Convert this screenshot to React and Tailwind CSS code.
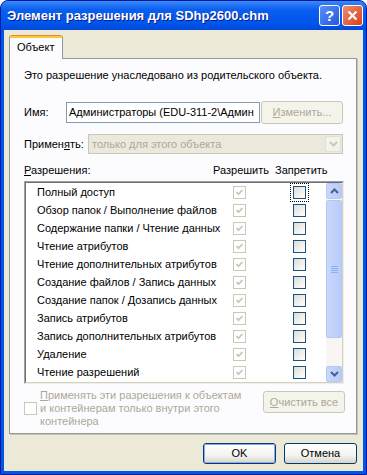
import React from "react";

const perms = [
  "Полный доступ",
  "Обзор папок / Выполнение файлов",
  "Содержание папки / Чтение данных",
  "Чтение атрибутов",
  "Чтение дополнительных атрибутов",
  "Создание файлов / Запись данных",
  "Создание папок / Дозапись данных",
  "Запись атрибутов",
  "Запись дополнительных атрибутов",
  "Удаление",
  "Чтение разрешений",
];

function Check({ color }) {
  return (
    <svg width="9" height="9" viewBox="0 0 9 9">
      <polyline points="1.5,4 3.5,6.2 7.5,2" fill="none" stroke={color} strokeWidth="1.8" />
    </svg>
  );
}

function AllowBox() {
  // disabled + checked
  return (
    <div className="flex h-[13px] w-[13px] items-center justify-center border border-[#cac8bb] bg-white">
      <Check color="#cac8bb" />
    </div>
  );
}

function DenyBox({ focused }) {
  return (
    <div
      className={`h-[13px] w-[13px] border border-[#1c5180] bg-[linear-gradient(135deg,#dcdcd7,#ffffff)] ${
        focused ? "outline-1 outline-dotted outline-black outline-offset-[2px]" : ""
      }`}
    />
  );
}

function Chevron({ up, color }) {
  return (
    <svg width="9" height="6" viewBox="0 0 9 6">
      <polyline
        points={up ? "1,5 4.5,1.5 8,5" : "1,1 4.5,4.5 8,1"}
        fill="none"
        stroke={color}
        strokeWidth="2"
      />
    </svg>
  );
}

function ScrollBtn({ up }) {
  return (
    <div className="flex h-[16px] w-[16px] items-center justify-center rounded-[2px] border border-[#b4c8f6] bg-[linear-gradient(to_right,#c9d8fc,#b6cbfa)]">
      <Chevron up={up} color="#4d6185" />
    </div>
  );
}

function XpButton({ children, def, className = "" }) {
  return (
    <div
      className={`flex h-[21px] items-center justify-center rounded-[3px] border border-[#003c74] bg-[linear-gradient(to_bottom,#ffffff,#f3f3ef_60%,#d8d4c9)] ${className}`}
    >
      <div
        className={`flex h-full w-full items-center justify-center rounded-[2px] ${
          def ? "border border-[#8aa9ee]" : ""
        }`}
      >
        {children}
      </div>
    </div>
  );
}

function DisabledButton({ children, className = "" }) {
  return (
    <div
      className={`flex items-center justify-center rounded-[3px] border border-[#c9c7ba] bg-[#f5f4ea] text-[#aca899] ${className}`}
    >
      {children}
    </div>
  );
}

export default function App() {
  return (
    <div className="h-[475px] w-[367px] bg-white font-['Liberation_Sans',Arial,sans-serif] text-[11px] leading-[13px] text-black">
      <div className="flex h-[475px] w-[367px] flex-col overflow-hidden rounded-t-[8px] border border-[#0019a0] bg-[#0055e5]">
        {/* Title bar */}
        <div className="flex h-[29px] shrink-0 items-center bg-[linear-gradient(to_bottom,#3a8cf8_0%,#2a7bf5_10%,#0a5ff0_30%,#0055ea_80%,#0048d8_100%)] pl-[6px] pr-[3px]">
          <span className="flex-1 text-[13px] font-bold text-white [text-shadow:1px_1px_#0a1c8c]">
            Элемент разрешения для SDhp2600.chm
          </span>
          <div className="flex gap-[2px]">
            <div className="flex h-[21px] w-[21px] items-center justify-center rounded-[3px] border border-white bg-[linear-gradient(135deg,#5b91f7,#2357e0)] text-[15px] font-bold leading-none text-white">
              ?
            </div>
            <div className="flex h-[21px] w-[21px] items-center justify-center rounded-[3px] border border-white bg-[linear-gradient(135deg,#f08c6c,#d6421b)]">
              <svg width="11" height="11" viewBox="0 0 11 11">
                <path d="M1.5 1.5 L9.5 9.5 M9.5 1.5 L1.5 9.5" stroke="white" strokeWidth="2.2" />
              </svg>
            </div>
          </div>
        </div>

        {/* Body */}
        <div className="mx-[3px] mb-[3px] flex flex-1 flex-col bg-[#ece9d8] pt-[5px]">
          {/* Tab */}
          <div className="ml-[5px] flex">
            <div className="relative z-10 -mb-px h-[24px] w-[54px] rounded-t-[3px] border-x border-t border-[#919b9c] border-t-[#e68b2c] bg-[#fcfcfe]">
              <div className="h-[2px] bg-[#ffc73c]" />
              <div className="mt-[3px] pl-[7px]">Объект</div>
            </div>
          </div>

          {/* Panel */}
          <div className="ml-[5px] flex h-[376px] w-[348px] flex-col border border-[#919b9c] bg-[#fcfcfe] pl-[14px] pr-[11px] pt-[10px] shadow-[1px_1px_0_#c5c2b2]">
            <div>Это разрешение унаследовано из родительского объекта.</div>

            <div className="mt-[19px] flex h-[23px] items-center">
              <span className="w-[42px]">Имя:</span>
              <div className="flex h-[21px] w-[194px] items-center overflow-hidden whitespace-nowrap border border-[#7f9db9] bg-white pl-[2px]">
                Администраторы (EDU-311-2\Админ
              </div>
              <DisabledButton className="ml-[1px] h-[23px] w-[82px]">
                <span>
                  <span className="underline">И</span>зменить...
                </span>
              </DisabledButton>
            </div>

            <div className="mt-[10px] flex h-[20px] items-center">
              <span className="w-[64px]">
                Примен<span className="underline">я</span>ть:
              </span>
              <div className="flex h-[20px] w-[255px] items-center border border-[#c9c7ba] bg-[#ebe9dd] pl-[3px] text-[#aca899]">
                <span className="flex-1">только для этого объекта</span>
                <div className="mr-px flex h-[16px] w-[16px] items-center justify-center rounded-[2px] border border-[#e2e0d5] bg-[#f3f2ec]">
                  <Chevron color="#c9c7ba" />
                </div>
              </div>
            </div>

            <div className="mt-[10px] flex h-[13px]">
              <span className="w-[189px]">
                <span className="underline">Р</span>азрешения:
              </span>
              <span className="w-[62px]">Разрешить</span>
              <span>Запретить</span>
            </div>

            {/* Permission list */}
            <div className="mt-[4px] h-[203px] w-[320px] border border-b-[#f1efe2] border-l-[#a0a0a0] border-r-[#f1efe2] border-t-[#a0a0a0]">
              <div className="flex h-full border border-b-[#d4d0c8] border-l-[#707070] border-r-[#d4d0c8] border-t-[#707070] bg-white">
                <div className="flex-1">
                  {perms.map((p, i) => (
                    <div key={p} className="flex h-[18px] items-center">
                      <span className="w-[207px] whitespace-nowrap pl-[11px]">{p}</span>
                      <div className="w-[60px]">
                        <AllowBox />
                      </div>
                      <DenyBox focused={i === 0} />
                    </div>
                  ))}
                </div>
                {/* Scrollbar */}
                <div className="flex w-[16px] flex-col bg-[#f7f6f2]">
                  <ScrollBtn up />
                  <div className="mt-px flex h-[138px] flex-col items-center justify-center gap-[1px] rounded-[2px] border border-[#b4c8f6] bg-[linear-gradient(to_right,#c9d8fc,#b8ccfa)]">
                    <div className="h-px w-[7px] bg-[#8cb0f8]" />
                    <div className="h-px w-[7px] bg-[#8cb0f8]" />
                    <div className="h-px w-[7px] bg-[#8cb0f8]" />
                    <div className="h-px w-[7px] bg-[#8cb0f8]" />
                  </div>
                  <div className="flex-1" />
                  <ScrollBtn />
                </div>
              </div>
            </div>

            <div className="mt-[5px] flex items-start">
              <div className="flex items-center text-[#aca899]">
                <div className="h-[13px] w-[13px] shrink-0 border border-[#cac8bb] bg-white" />
                <div className="ml-[3px] w-[204px]">
                  <span className="underline">П</span>рименять эти разрешения к объектам и контейнерам только внутри этого контейнера
                </div>
              </div>
              <DisabledButton className="ml-auto mt-[2px] h-[22px] w-[82px] shrink-0">
                <span>
                  <span className="underline">О</span>чистить все
                </span>
              </DisabledButton>
            </div>
          </div>

          {/* Dialog buttons */}
          <div className="mt-[9px] flex justify-end gap-[8px] pr-[6px]">
            <XpButton def className="w-[73px]">
              OK
            </XpButton>
            <XpButton className="w-[73px]">Отмена</XpButton>
          </div>
        </div>
      </div>
    </div>
  );
}
